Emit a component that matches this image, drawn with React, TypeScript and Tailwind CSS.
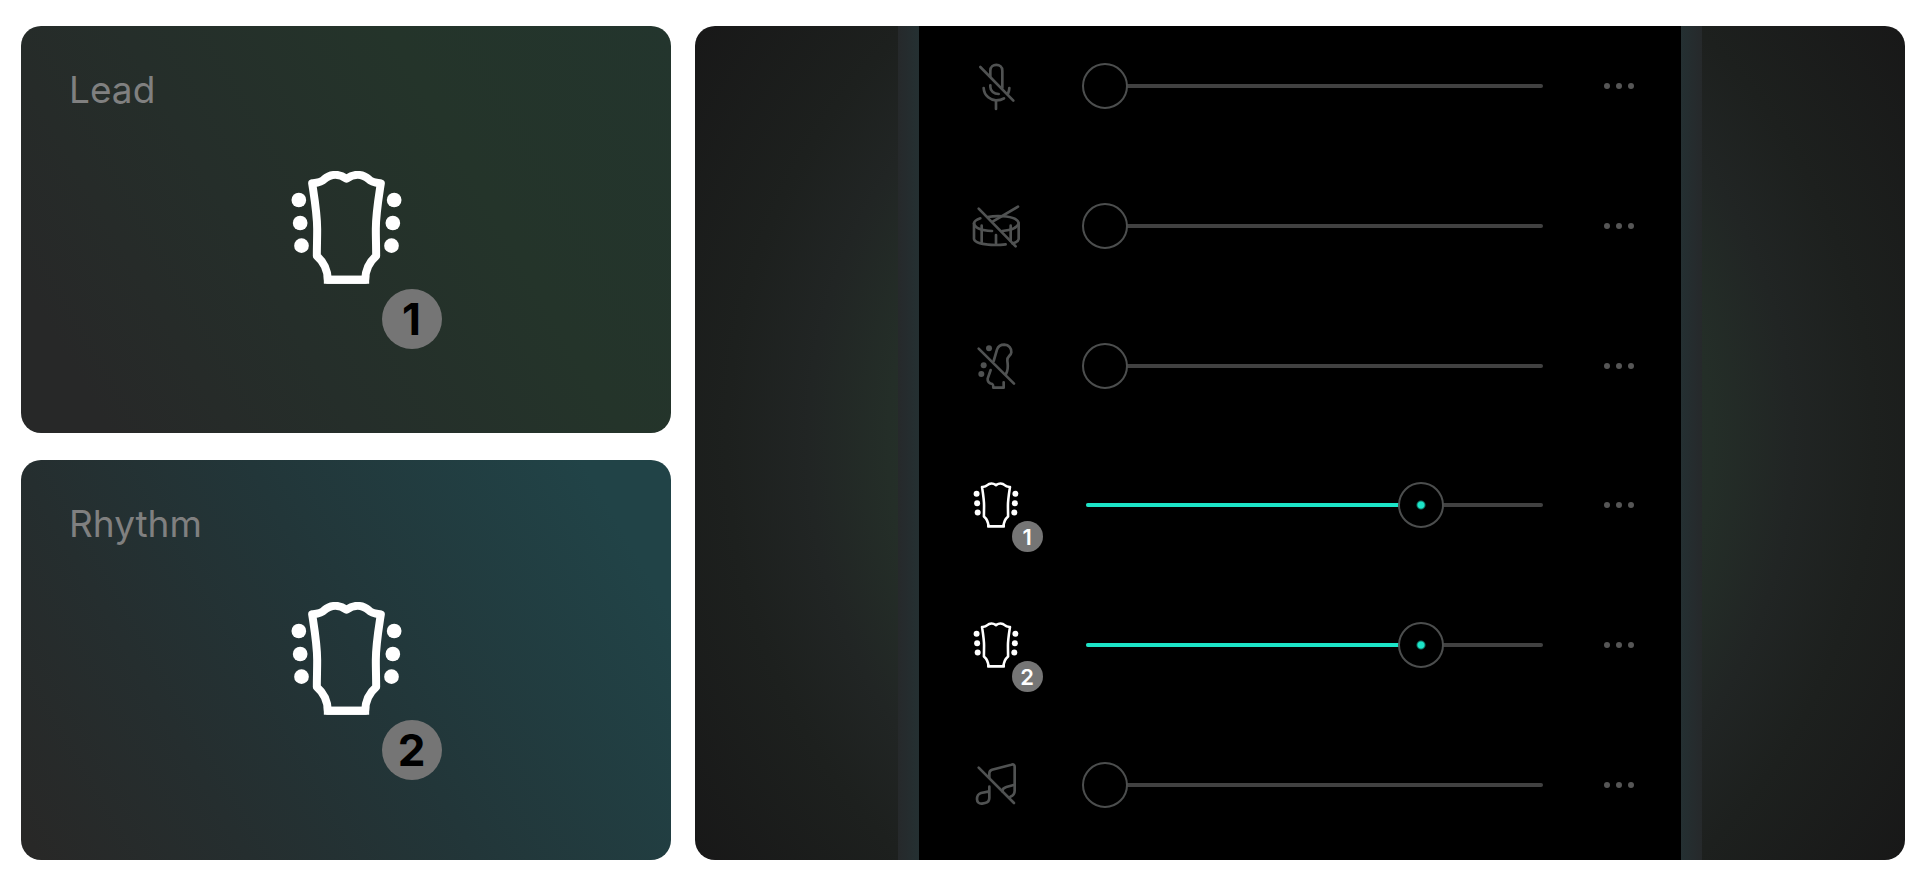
import { useState } from "react";
import type { ReactNode } from "react";

type IconName = "mic" | "drums" | "bass" | "guitar" | "music";

interface Track {
  id: string;
  label: string;
  icon: IconName;
  volume: number;
  badge?: number;
}

const initialTracks: Track[] = [
  { id: "vocals", label: "Vocals", icon: "mic", volume: 0 },
  { id: "drums", label: "Drums", icon: "drums", volume: 0 },
  { id: "bass", label: "Bass", icon: "bass", volume: 0 },
  { id: "lead", label: "Lead guitar", icon: "guitar", volume: 75, badge: 1 },
  { id: "rhythm", label: "Rhythm guitar", icon: "guitar", volume: 75, badge: 2 },
  { id: "other", label: "Other", icon: "music", volume: 0 },
];

/** Guitar headstock with three tuning pegs on each side. */
function Headstock({ className, stroke }: { className: string; stroke: number }) {
  return (
    <svg
      viewBox="61 61 332 339"
      className={className}
      fill="none"
      stroke="currentColor"
      strokeWidth={stroke}
      strokeLinejoin="round"
      aria-hidden="true"
    >
      <path d="M227 84C203 67 178 70 160 86C152 95 140 96 124 98C132 150 139 190 139 235C139 265 138 290 138 316C158 333 170 352 171 387H283C284 352 296 333 316 316C316 290 315 265 315 235C315 190 322 150 330 98C314 96 302 95 294 86C276 70 251 67 227 84Z" />
      <path d="M171 375V387H283V375" strokeLinejoin="miter" />
      <g fill="currentColor" stroke="none">
        <circle cx="84" cy="148" r="22" />
        <circle cx="88" cy="217" r="22" />
        <circle cx="92" cy="285" r="22" />
        <circle cx="370" cy="148" r="22" />
        <circle cx="366" cy="217" r="22" />
        <circle cx="362" cy="285" r="22" />
      </g>
    </svg>
  );
}

function MutedIcon({ children }: { children: ReactNode }) {
  return (
    <svg
      viewBox="40 38 138 138"
      className="size-[46px] overflow-visible text-[#505252]"
      fill="none"
      stroke="currentColor"
      strokeWidth="8"
      strokeLinecap="round"
      strokeLinejoin="round"
      aria-hidden="true"
    >
      {children}
    </svg>
  );
}

function TrackIcon({ name }: { name: IconName }) {
  switch (name) {
    case "mic":
      return (
        <MutedIcon>
          <path d="M62 50L161 151" />
          <path d="M92 78V61C92 38 128 38 128 61V112" />
          <path d="M92 105V110C92 122 103 131 117 131" />
          <path d="M72 113C73 138 95 150 109 150C119 150 127 148 133 144" />
          <path d="M149 113C149 120 147 125 145 130" />
          <path d="M109 150V176" />
        </MutedIcon>
      );
    case "drums":
      return (
        <MutedIcon>
          <path d="M57 55L168 168" />
          <path d="M175 49L100 93" />
          <path d="M62 84C50 88 44 92 43 99C45 112 65 121 97 122" />
          <path d="M84 80C110 75 150 77 165 85C172 89 177 94 177 99C175 110 158 119 128 122" />
          <path d="M43 99V146C46 158 75 164 109 164C120 164 130 163 138 162" />
          <path d="M177 99V146C176 152 168 157 158 159" />
          <path d="M66 106V156M109 134V163M153 106V152" />
        </MutedIcon>
      );
    case "bass":
      return (
        <MutedIcon>
          <path d="M57 55L163 160" />
          <path d="M102 92L112 58C116 46 125 43 134 43C148 44 156 54 155 66C154 76 142 78 143 90C144 105 148 115 139 131" />
          <path d="M93 119L84 145C83 156 92 160 98 161C101 163 101 166 101 172H132V156" />
          <g fill="currentColor" stroke="none">
            <circle cx="88" cy="54" r="9" />
            <circle cx="72" cy="105" r="9" />
            <circle cx="65" cy="131" r="9" />
          </g>
        </MutedIcon>
      );
    case "music":
      return (
        <MutedIcon>
          <path d="M57 55L163 161" />
          <path d="M89 85V72C89 66 91 63 97 61L155 46C162 44 165 47 165 52V124C165 132 160 139 152 142" />
          <path d="M89 112V146C89 155 85 159 76 161L67 163C58 164 52 158 52 150C52 137 56 134 64 131L89 126" />
          <path d="M162 107L140 113C133 115 128 119 128 126" />
        </MutedIcon>
      );
    default:
      return <Headstock className="size-[46px] text-white" stroke={19} />;
  }
}

function GuitarCard({
  title,
  badge,
  background,
}: {
  title: string;
  badge: number;
  background: string;
}) {
  return (
    <section className={`grid rounded-[20px] ${background}`}>
      <h2 className="col-start-1 row-start-1 px-12 py-[42px] font-['Inter',sans-serif] text-[37px] leading-[44px] text-[#808080]">
        {title}
      </h2>
      <div className="relative col-start-1 row-start-1 mb-1 self-center justify-self-center">
        <Headstock className="h-[113px] w-[111px] text-white" stroke={24} />
        <span className="absolute top-[118px] left-[91px] flex size-[60px] items-center justify-center rounded-full bg-[#757575] font-['Inter',sans-serif] text-[44px] leading-none font-bold text-black">
          {badge}
        </span>
      </div>
    </section>
  );
}

function TrackRow({ track, onChange }: { track: Track; onChange: (volume: number) => void }) {
  const active = track.volume > 0;

  return (
    <li className="flex h-[46px] items-center">
      <div className="relative shrink-0">
        <TrackIcon name={track.icon} />
        {track.badge && (
          <span className="absolute top-[39px] left-[39px] flex size-[31px] items-center justify-center rounded-full bg-[#757575] font-['Inter',sans-serif] text-[22px] leading-none font-semibold text-white">
            {track.badge}
          </span>
        )}
      </div>

      <div className="relative ml-[63px] h-[46px] flex-1">
        {/* Track line under the native slider */}
        <div className="absolute inset-x-1 top-[21px] mr-[2px] h-1 overflow-hidden rounded-full bg-[#414141]">
          <div className="h-full bg-[#1ce5c8]" style={{ width: `${track.volume}%` }} />
        </div>
        <input
          type="range"
          min={0}
          max={100}
          value={track.volume}
          aria-label={`${track.label} volume`}
          onChange={(e) => onChange(Number(e.target.value))}
          className={`absolute inset-0 m-0 h-[46px] w-full cursor-pointer appearance-none bg-transparent outline-none [&::-webkit-slider-thumb]:size-[46px] [&::-webkit-slider-thumb]:appearance-none [&::-webkit-slider-thumb]:rounded-full [&::-webkit-slider-thumb]:border-2 [&::-webkit-slider-thumb]:border-[#4c4e4e] [&::-webkit-slider-thumb]:bg-black ${
            active
              ? "[&::-webkit-slider-thumb]:bg-[radial-gradient(circle,#1ce5c8_3px,#000_5px)]"
              : ""
          }`}
        />
      </div>

      <button
        type="button"
        aria-label={`${track.label} options`}
        className="ml-[47px] flex size-[46px] shrink-0 items-center justify-center gap-[6px]"
      >
        <span className="size-[6px] rounded-full bg-[#565656]" />
        <span className="size-[6px] rounded-full bg-[#565656]" />
        <span className="size-[6px] rounded-full bg-[#565656]" />
      </button>
    </li>
  );
}

export default function App() {
  const [tracks, setTracks] = useState<Track[]>(initialTracks);

  const setVolume = (id: string, volume: number) => {
    setTracks((prev) => prev.map((t) => (t.id === id ? { ...t, volume } : t)));
  };

  return (
    <main className="grid min-h-screen grid-cols-[65fr_121fr] gap-6 bg-white pt-[26px] pr-[15px] pb-5 pl-[21px]">
      <div className="grid grid-rows-[407fr_400fr] gap-[27px]">
        <GuitarCard
          title="Lead"
          badge={1}
          background="bg-[linear-gradient(60deg,#272828_10%,#252e2a_38%,#24342a_68%,#23352d)]"
        />
        <GuitarCard
          title="Rhythm"
          badge={2}
          background="bg-[linear-gradient(60deg,#282827_2%,#252e2f_26%,#223639_52%,#214347_90%)]"
        />
      </div>

      <section className="flex justify-center overflow-hidden rounded-[20px] bg-[radial-gradient(circle,#26352c_45%,#242e28_56%,#212524_67%,#1d201e_78%,#181818)]">
        <div className="flex w-[66.5%] bg-[linear-gradient(to_right,#26292b,#243133_3%,#243133_97%,#26292b)] px-[21px]">
          <ul className="flex flex-1 flex-col justify-between bg-black pt-[37px] pr-[39px] pb-[52px] pl-[54px]">
            {tracks.map((track) => (
              <TrackRow
                key={track.id}
                track={track}
                onChange={(volume) => setVolume(track.id, volume)}
              />
            ))}
          </ul>
        </div>
      </section>
    </main>
  );
}
